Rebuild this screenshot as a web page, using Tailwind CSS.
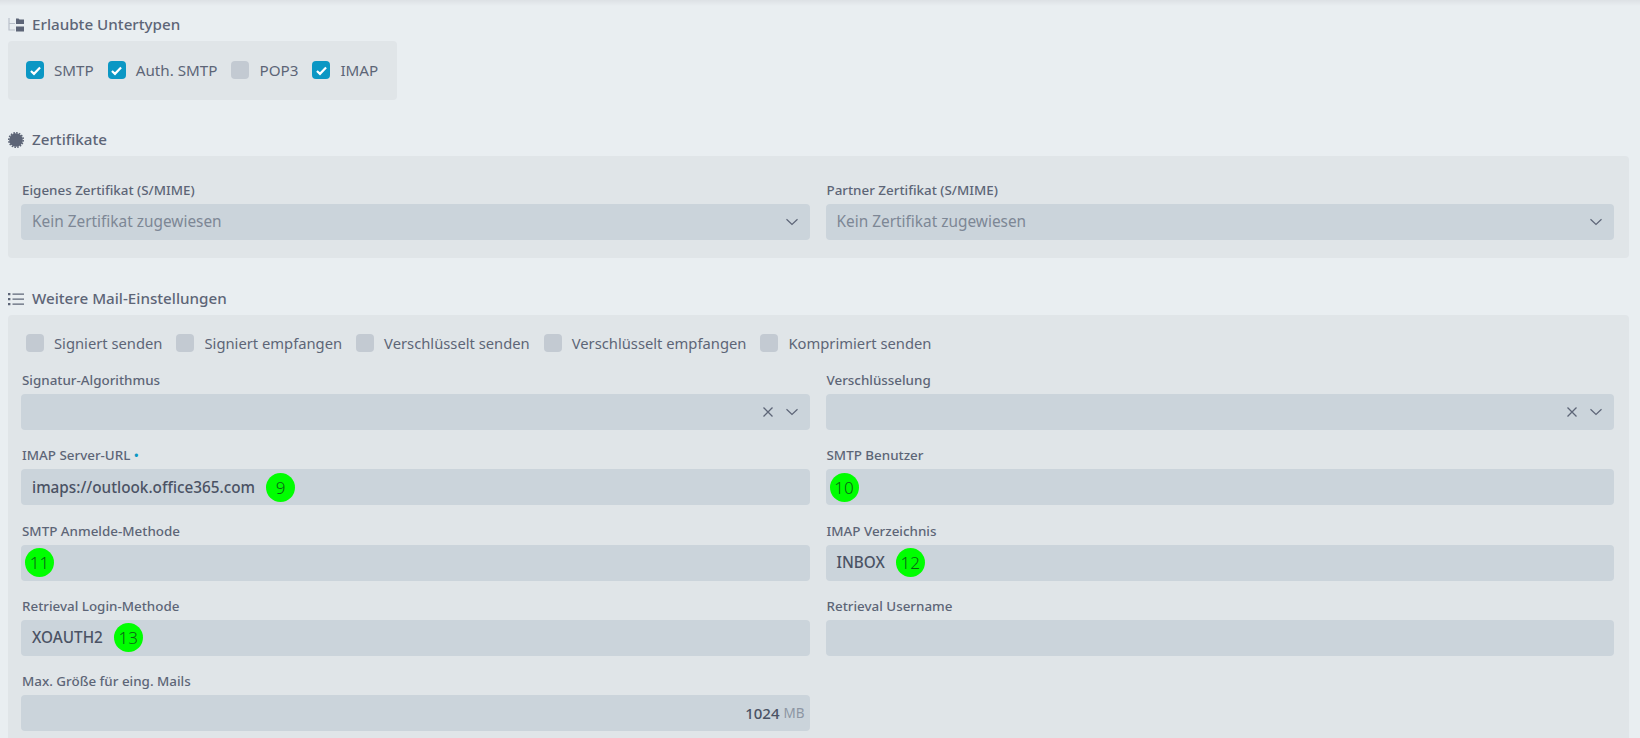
<!DOCTYPE html>
<html lang="de">
<head>
  <meta charset="UTF-8" />
  <title>Mail-Einstellungen</title>
  <script src="https://cdn.jsdelivr.net/npm/@tailwindcss/browser@4"></script>
</head>
<body class="bg-[#e9eef1] h-[738px] overflow-hidden font-['Noto_Sans',sans-serif] text-[#5d6577] relative">
  <!-- top shadow -->
  <div class="absolute top-0 inset-x-0 h-[6px] bg-gradient-to-b from-[#dde1e5] to-transparent"></div>

  <main class="pl-2 pr-[11px] pt-[15px]">

    <!-- Erlaubte Untertypen -->
    <h2 class="flex items-center gap-2 h-[20px] text-[15.2px] font-medium">
      <svg class="w-4 h-4" viewBox="0 0 16 16"><path d="M1 1v12h6M1 6.5h6" fill="none" stroke="#b9c0ca" stroke-width="1.2"/><path d="M8 1.5h2.5l1 1H16V7H8zM8 9.5h8V14.5H8z" fill="#5d6577"/></svg>
      <span class="pb-[2px]">Erlaubte Untertypen</span>
    </h2>
    <div class="mt-[6px] w-[389px] h-[59px] bg-[#e0e5e8] rounded flex items-center pl-[18px] text-[15.2px]">
      <label class="flex items-center gap-[10px] mr-[14px]"><span class="w-[18px] h-[18px] rounded bg-[#0b97c4] flex items-center justify-center"><svg class="w-[13px] h-[13px]" viewBox="0 0 12 12"><path d="M1.8 6.4l2.8 2.7L10.2 3.2" fill="none" stroke="#fff" stroke-width="2"/></svg></span>SMTP</label>
      <label class="flex items-center gap-[10px] mr-[14px]"><span class="w-[18px] h-[18px] rounded bg-[#0b97c4] flex items-center justify-center"><svg class="w-[13px] h-[13px]" viewBox="0 0 12 12"><path d="M1.8 6.4l2.8 2.7L10.2 3.2" fill="none" stroke="#fff" stroke-width="2"/></svg></span>Auth. SMTP</label>
      <label class="flex items-center gap-[10px] mr-[14px]"><span class="w-[18px] h-[18px] rounded bg-[#c3cad2]"></span>POP3</label>
      <label class="flex items-center gap-[10px]"><span class="w-[18px] h-[18px] rounded bg-[#0b97c4] flex items-center justify-center"><svg class="w-[13px] h-[13px]" viewBox="0 0 12 12"><path d="M1.8 6.4l2.8 2.7L10.2 3.2" fill="none" stroke="#fff" stroke-width="2"/></svg></span>IMAP</label>
    </div>

    <!-- Zertifikate -->
    <h2 class="mt-[30px] flex items-center gap-2 h-[20px] text-[15.2px] font-medium">
      <svg class="w-4 h-4" viewBox="0 0 16 16"><circle cx="8" cy="8" r="6.8" fill="#5d6577"/><circle cx="8" cy="8" r="7.2" fill="none" stroke="#5d6577" stroke-width="1.6" stroke-dasharray="1.6 1.22"/></svg>
      <span class="pb-[2px]">Zertifikate</span>
    </h2>
    <div class="mt-[6px] h-[102px] bg-[#e0e5e8] rounded pl-[13px] pr-[15px] pt-[28px] grid grid-cols-2 gap-x-[16px] text-[13.4px] font-medium">
      <div>
        <div class="h-[13px] mb-[7px] leading-[13px] pl-px">Eigenes Zertifikat (S/MIME)</div>
        <div class="h-9 bg-[#cbd4db] rounded flex items-center pl-[11px] pr-[12px] text-[15.4px] font-normal text-[#7d8795]">
          <span class="flex-1">Kein Zertifikat zugewiesen</span>
          <svg class="w-3 h-2" viewBox="0 0 12 8"><path d="M.5 1.2L6 6.5l5.5-5.3" fill="none" stroke="#5d6577" stroke-width="1.2"/></svg>
        </div>
      </div>
      <div>
        <div class="h-[13px] mb-[7px] leading-[13px] pl-px">Partner Zertifikat (S/MIME)</div>
        <div class="h-9 bg-[#cbd4db] rounded flex items-center pl-[11px] pr-[12px] text-[15.4px] font-normal text-[#7d8795]">
          <span class="flex-1">Kein Zertifikat zugewiesen</span>
          <svg class="w-3 h-2" viewBox="0 0 12 8"><path d="M.5 1.2L6 6.5l5.5-5.3" fill="none" stroke="#5d6577" stroke-width="1.2"/></svg>
        </div>
      </div>
    </div>

    <!-- Weitere Mail-Einstellungen -->
    <h2 class="mt-[31px] flex items-center gap-2 h-[20px] text-[15.2px] font-medium">
      <svg class="w-4 h-4" viewBox="0 0 16 16"><path d="M0 2h2.4v2.2H0zM0 7h2.4v2.2H0zM0 12h2.4v2.2H0zM4.5 2.4H16v1.4H4.5zM4.5 7.4H16v1.4H4.5zM4.5 12.4H16v1.4H4.5z" fill="#5d6577"/></svg>
      <span class="pb-[2px]">Weitere Mail-Einstellungen</span>
    </h2>
    <div class="mt-[6px] h-[500px] bg-[#e0e5e8] rounded pl-[13px] pr-[15px] pt-[19px]">
      <div class="flex items-center pl-[5px] text-[14.75px] h-[18px]">
        <label class="flex items-center gap-[10px] mr-[14px]"><span class="w-[18px] h-[18px] rounded bg-[#c3cad2]"></span>Signiert senden</label>
        <label class="flex items-center gap-[10px] mr-[14px]"><span class="w-[18px] h-[18px] rounded bg-[#c3cad2]"></span>Signiert empfangen</label>
        <label class="flex items-center gap-[10px] mr-[14px]"><span class="w-[18px] h-[18px] rounded bg-[#c3cad2]"></span>Verschlüsselt senden</label>
        <label class="flex items-center gap-[10px] mr-[14px]"><span class="w-[18px] h-[18px] rounded bg-[#c3cad2]"></span>Verschlüsselt empfangen</label>
        <label class="flex items-center gap-[10px]"><span class="w-[18px] h-[18px] rounded bg-[#c3cad2]"></span>Komprimiert senden</label>
      </div>

      <div class="mt-[22px] grid grid-cols-2 gap-x-[16px] gap-y-[19.25px] text-[13.4px] font-medium">
        <div>
          <div class="h-[13px] mb-[7px] leading-[13px] pl-px">Signatur-Algorithmus</div>
          <div class="h-9 bg-[#cbd4db] rounded flex items-center justify-end gap-[13px] pr-[12px]">
            <svg class="w-[10px] h-[10px]" viewBox="0 0 10 10"><path d="M.5.5l9 9M9.5.5l-9 9" stroke="#5d6577" stroke-width="1.3"/></svg>
            <svg class="w-3 h-2" viewBox="0 0 12 8"><path d="M.5 1.2L6 6.5l5.5-5.3" fill="none" stroke="#5d6577" stroke-width="1.2"/></svg>
          </div>
        </div>
        <div>
          <div class="h-[13px] mb-[7px] leading-[13px] pl-px">Verschlüsselung</div>
          <div class="h-9 bg-[#cbd4db] rounded flex items-center justify-end gap-[13px] pr-[12px]">
            <svg class="w-[10px] h-[10px]" viewBox="0 0 10 10"><path d="M.5.5l9 9M9.5.5l-9 9" stroke="#5d6577" stroke-width="1.3"/></svg>
            <svg class="w-3 h-2" viewBox="0 0 12 8"><path d="M.5 1.2L6 6.5l5.5-5.3" fill="none" stroke="#5d6577" stroke-width="1.2"/></svg>
          </div>
        </div>

        <div>
          <div class="h-[13px] mb-[7px] leading-[13px] pl-px">IMAP Server-URL <span class="text-[#0b97c4]">•</span></div>
          <div class="h-9 bg-[#cbd4db] rounded flex items-center pl-[11px] text-[15.3px] text-[#4a5264]">
            imaps://outlook.office365.com
            <span class="ml-[11px] w-[29px] h-[29px] rounded-full bg-[#00ff00] flex items-center justify-center text-[17px] font-light text-[#0b5f16]">9</span>
          </div>
        </div>
        <div>
          <div class="h-[13px] mb-[7px] leading-[13px] pl-px">SMTP Benutzer</div>
          <div class="h-9 bg-[#cbd4db] rounded flex items-center pl-1">
            <span class="w-[29px] h-[29px] rounded-full bg-[#00ff00] flex items-center justify-center text-[17px] font-light text-[#0b5f16]">10</span>
          </div>
        </div>

        <div>
          <div class="h-[13px] mb-[7px] leading-[13px] pl-px">SMTP Anmelde-Methode</div>
          <div class="h-9 bg-[#cbd4db] rounded flex items-center pl-1">
            <span class="w-[29px] h-[29px] rounded-full bg-[#00ff00] flex items-center justify-center text-[17px] font-light text-[#0b5f16]">11</span>
          </div>
        </div>
        <div>
          <div class="h-[13px] mb-[7px] leading-[13px] pl-px">IMAP Verzeichnis</div>
          <div class="h-9 bg-[#cbd4db] rounded flex items-center pl-[11px] text-[15.3px] text-[#4a5264]">
            INBOX
            <span class="ml-[11px] w-[29px] h-[29px] rounded-full bg-[#00ff00] flex items-center justify-center text-[17px] font-light text-[#0b5f16]">12</span>
          </div>
        </div>

        <div>
          <div class="h-[13px] mb-[7px] leading-[13px] pl-px">Retrieval Login-Methode</div>
          <div class="h-9 bg-[#cbd4db] rounded flex items-center pl-[11px] text-[15.3px] text-[#4a5264]">
            XOAUTH2
            <span class="ml-[11px] w-[29px] h-[29px] rounded-full bg-[#00ff00] flex items-center justify-center text-[17px] font-light text-[#0b5f16]">13</span>
          </div>
        </div>
        <div>
          <div class="h-[13px] mb-[7px] leading-[13px] pl-px">Retrieval Username</div>
          <div class="h-9 bg-[#cbd4db] rounded"></div>
        </div>

        <div>
          <div class="h-[13px] mb-[7px] leading-[13px] pl-px">Max. Größe für eing. Mails</div>
          <div class="h-9 bg-[#cbd4db] rounded flex items-center justify-end pr-[5px] text-[15px] text-[#4a5264]">
            1024 <span class="ml-1 text-[13.5px] font-normal text-[#8d96a3]">MB</span>
          </div>
        </div>
      </div>
    </div>
  </main>
</body>
</html>
